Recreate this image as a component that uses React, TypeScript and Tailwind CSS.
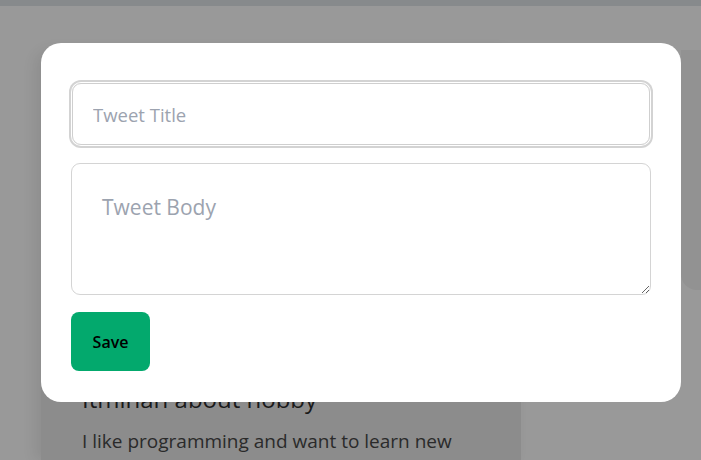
import React from "react";

// page behind the dialog, already dimmed by the overlay
function Backdrop() {
  return (
    <div className="flex h-full flex-col">
      <div className="h-[6px] bg-[#878a8c]" />
      <div className="flex flex-1 bg-[#999999] pl-[41px] pt-[44px]">
        <div className="w-[480px] rounded-t-2xl bg-[#8c8c8c] pl-[41px] pt-[332px] shadow-[-6px_0_14px_rgba(0,0,0,0.08)]">
          <h2 className="text-[24px] font-medium leading-[34px] text-[#1a1a1a]">Itminan about hobby</h2>
          <p className="mt-[11px] text-[19px] leading-[28px] text-[#2a2a2a]">
            I like programming and want to learn new
          </p>
        </div>
        <div className="ml-[160px] h-[240px] flex-1 rounded-bl-2xl bg-[#929292]" />
      </div>
    </div>
  );
}

export default function App() {
  return (
    <div className="relative h-[460px] w-full overflow-hidden font-['Open_Sans',sans-serif]">
      <Backdrop />
      {/* modal */}
      <div className="absolute left-[41px] top-[43px] flex w-[640px] flex-col rounded-[20px] bg-white px-[30px] pb-[31px] pt-[40px]">
        <input
          type="text"
          placeholder="Tweet Title"
          className="mx-[1px] h-[62px] rounded-[9px] border border-[#cfcfcf] px-[20px] text-[18.5px] outline-none ring-2 ring-[#d3d3d3] ring-offset-1 placeholder:text-[#9ca3af]"
        />
        <textarea
          placeholder="Tweet Body"
          className="mt-[18px] h-[132px] rounded-[9px] border border-[#d4d4d4] px-[30px] pt-[28px] text-[21px] leading-[30px] outline-none placeholder:text-[#9ca3af]"
        />
        <button className="mt-[17px] h-[59px] w-[79px] rounded-[8px] bg-[#03a96d] text-[16px] font-semibold text-black">
          Save
        </button>
      </div>
    </div>
  );
}
